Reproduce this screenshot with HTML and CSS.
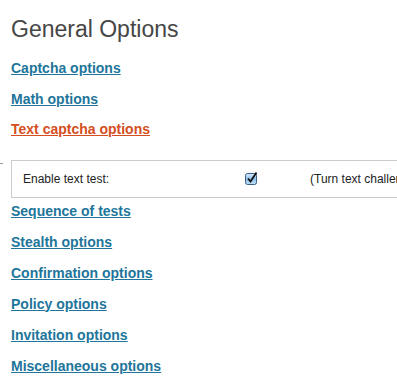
FILE: index.html
```html
<!DOCTYPE html>
<html>
<head>
<meta charset="utf-8">
<link rel="stylesheet" href="styles.css">
</head>
<body>
<div class="wrap">
  <h2 class="title">General Options</h2>
  <ul class="sections">
    <li><a href="#">Captcha options</a></li>
    <li><a href="#">Math options</a></li>
    <li><a href="#" class="active">Text captcha options</a></li>
  </ul>
  <div class="panel">
    <span class="tick"></span>
    <div class="row">
      <span class="label">Enable text test:</span>
      <span class="check">
        <svg width="13" height="13" viewBox="0 0 13 13">
          <defs>
            <linearGradient id="g" x1="0" y1="0" x2="0" y2="1">
              <stop offset="0" stop-color="#dcecfb"/>
              <stop offset="0.5" stop-color="#8fc1ec"/>
              <stop offset="1" stop-color="#bfe0fb"/>
            </linearGradient>
          </defs>
          <rect x="0.5" y="1.5" width="11" height="11" rx="2" fill="url(#g)" stroke="#3b5f85"/>
          <path d="M3 6.5 L5.5 9.5 L11.5 0.5" fill="none" stroke="#111" stroke-width="1.8"/>
        </svg>
      </span>
      <span class="desc">(Turn text challenge on or off)</span>
    </div>
  </div>
  <ul class="sections lower">
    <li><a href="#">Sequence of tests</a></li>
    <li><a href="#">Stealth options</a></li>
    <li><a href="#">Confirmation options</a></li>
    <li><a href="#">Policy options</a></li>
    <li><a href="#">Invitation options</a></li>
    <li><a href="#">Miscellaneous options</a></li>
  </ul>
</div>
</body>
</html>
```
FILE: styles.css
```css
html, body {
  margin: 0;
  padding: 0;
  background: #fff;
  overflow: hidden;
}
body {
  font-family: "Liberation Sans", Arial, sans-serif;
  color: #333;
}
.wrap {
  padding: 14px 0 0 11px;
  width: 500px;
}
.title {
  margin: 0;
  font-size: 23px;
  font-weight: normal;
  line-height: 30px;
  color: #464646;
  height: 39px;
}
.sections {
  list-style: none;
  margin: 0;
  padding: 0;
}
.sections li {
  height: 30.5px;
  line-height: 30.5px;
}
.sections.lower li {
  height: 31px;
  line-height: 31px;
}
.sections a {
  font-size: 14px;
  font-weight: bold;
  color: #21759b;
  text-decoration: underline;
}
.sections a.active {
  color: #d54e21;
}
.panel {
  position: relative;
  margin-top: 15px;
  margin-bottom: -3px;
}
.tick {
  position: absolute;
  left: -11px;
  top: 3px;
  width: 3px;
  height: 1px;
  background: #999;
}
.row {
  display: flex;
  align-items: center;
  height: 36px;
  border: 1px solid #ccc;
  font-size: 12px;
  color: #222;
  white-space: nowrap;
}
.label {
  padding-left: 11px;
  width: 222px;
}
.check {
  display: flex;
  width: 65px;
}
```
